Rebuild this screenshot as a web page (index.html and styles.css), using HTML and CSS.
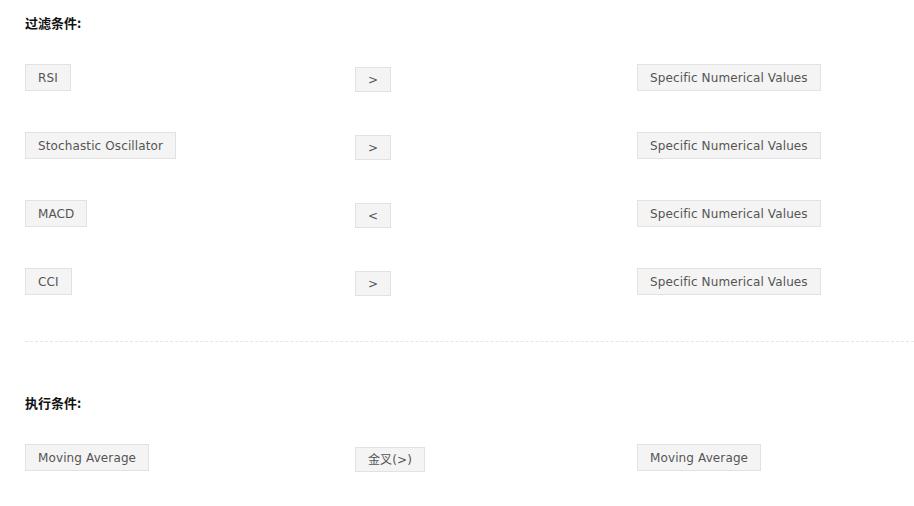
FILE: index.html
```html
<!DOCTYPE html>
<html lang="zh-CN">
<head>
    <meta charset="UTF-8">
    <meta name="viewport" content="width=device-width, initial-scale=1.0">
    <title>条件设置</title>
    <link rel="stylesheet" href="styles.css">
</head>
<body>
    <div class="section">
        <h3 class="section-title">过滤条件:</h3>

        <div class="row">
            <div class="cell"><span class="tag">RSI</span></div>
            <div class="cell"><span class="tag op">&gt;</span></div>
            <div class="cell"><span class="tag">Specific Numerical Values</span></div>
        </div>
        <div class="row">
            <div class="cell"><span class="tag">Stochastic Oscillator</span></div>
            <div class="cell"><span class="tag op">&gt;</span></div>
            <div class="cell"><span class="tag">Specific Numerical Values</span></div>
        </div>
        <div class="row">
            <div class="cell"><span class="tag">MACD</span></div>
            <div class="cell"><span class="tag op">&lt;</span></div>
            <div class="cell"><span class="tag">Specific Numerical Values</span></div>
        </div>
        <div class="row">
            <div class="cell"><span class="tag">CCI</span></div>
            <div class="cell"><span class="tag op">&gt;</span></div>
            <div class="cell"><span class="tag">Specific Numerical Values</span></div>
        </div>
    </div>

    <div class="divider"></div>

    <div class="section second">
        <h3 class="section-title">执行条件:</h3>

        <div class="row">
            <div class="cell"><span class="tag">Moving Average</span></div>
            <div class="cell"><span class="tag op">金叉(&gt;)</span></div>
            <div class="cell"><span class="tag">Moving Average</span></div>
        </div>
    </div>
</body>
</html>
```

FILE: styles.css
```css
* {
    margin: 0;
    padding: 0;
    box-sizing: border-box;
}

body {
    background-color: #fff;
    font-family: "DejaVu Sans", Verdana, "Noto Sans CJK SC", sans-serif;
    font-size: 12px;
    color: #555;
}

.section {
    padding: 15px 0 0 25px;
}

.section.second {
    padding-top: 53px;
}

.section-title {
    font-family: "Noto Sans CJK SC", sans-serif;
    font-size: 13px;
    font-weight: bold;
    line-height: 16px;
    color: #111;
    margin-bottom: 33px;
}

.row {
    display: grid;
    grid-template-columns: 330px 282px auto;
    height: 68px;
    align-items: start;
}

.tag {
    display: inline-block;
    height: 27px;
    line-height: 26px;
    padding: 0 12px;
    border: 1px solid #e2e2e2;
    background-color: #f4f4f4;
    color: #555;
    letter-spacing: 0.12px;
    white-space: nowrap;
}

.tag.op {
    height: 25px;
    line-height: 24px;
    margin-top: 3px;
    padding: 0 12px;
}

.divider {
    margin: 5px 0 0 25px;
    border-top: 1px dashed #e6e6e6;
}
```
